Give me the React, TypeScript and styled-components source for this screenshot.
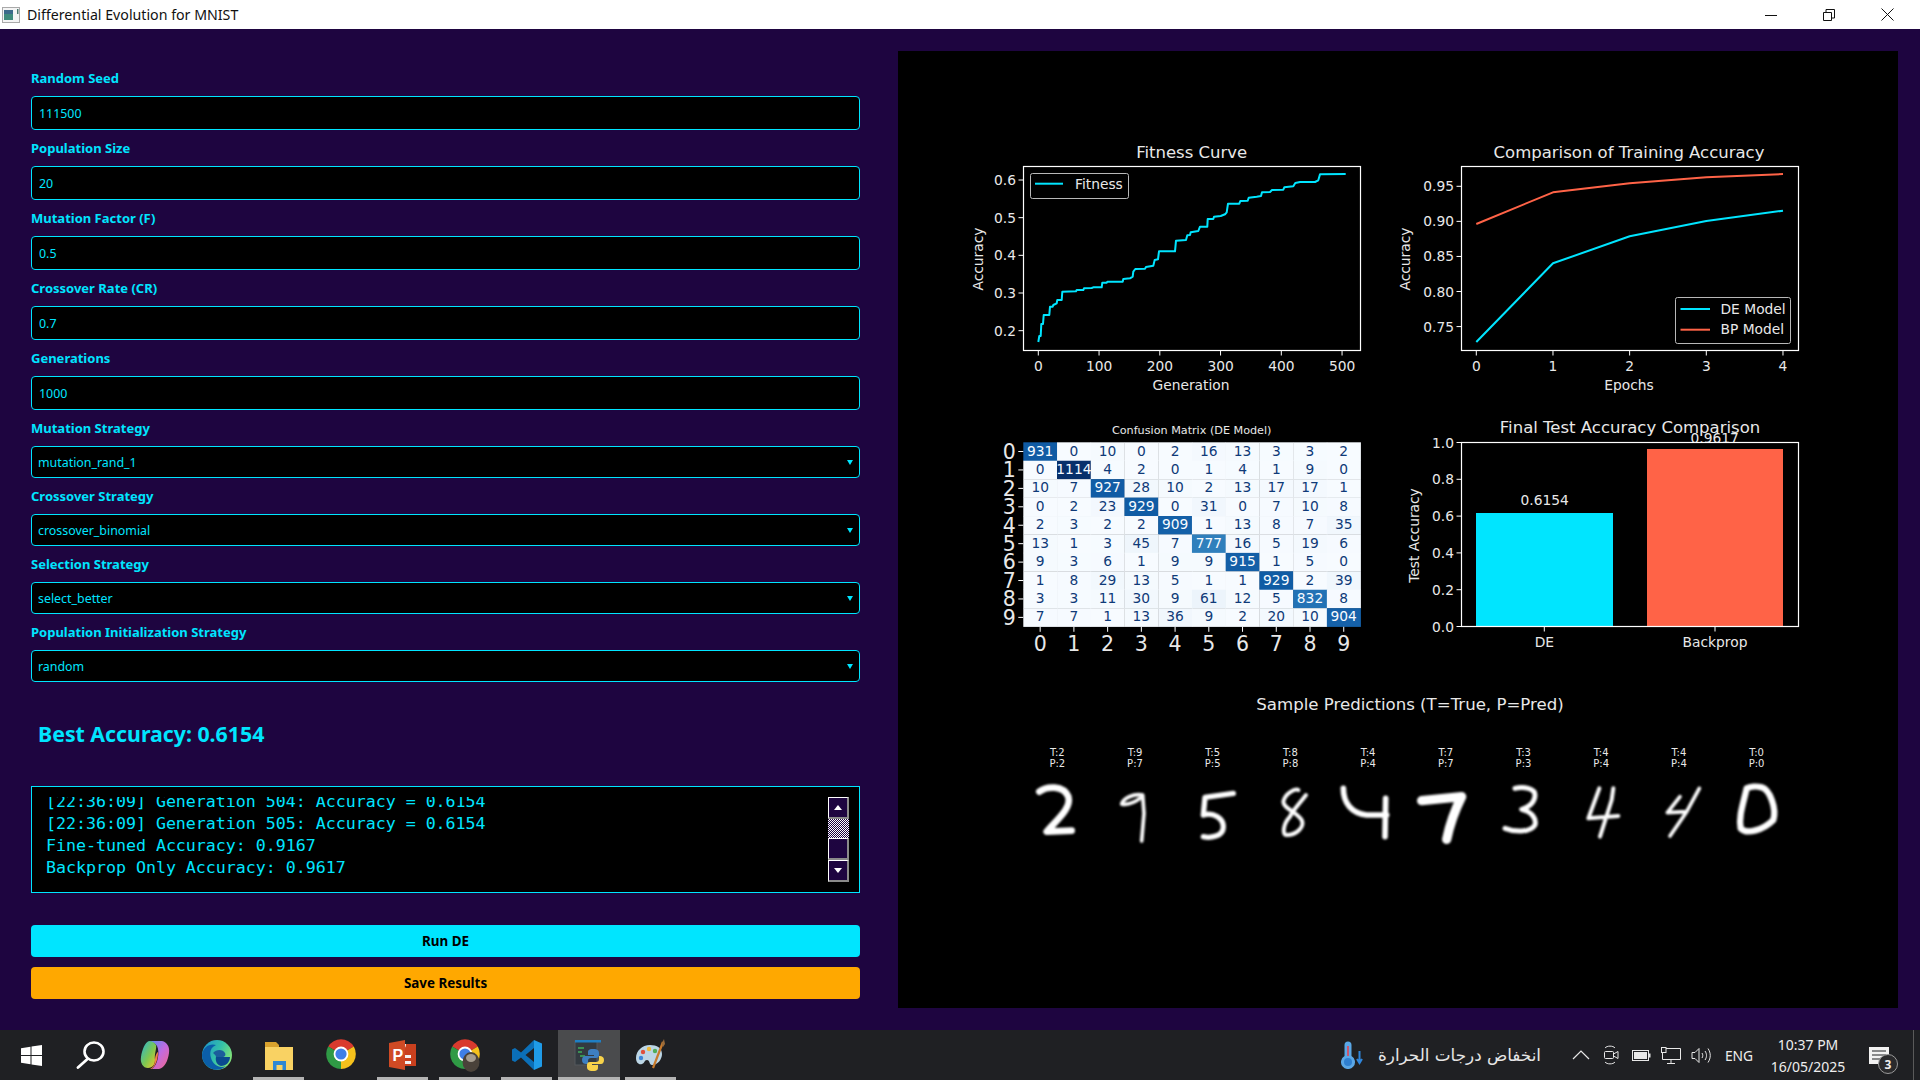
import React from 'react';
import styled, { createGlobalStyle } from 'styled-components';

const CYAN = '#00e5ff';
const TOMATO = '#ff6347';
const PURPLE = '#1e0540';

const GlobalStyle = createGlobalStyle`
  html, body {
    margin: 0;
    padding: 0;
    background: ${PURPLE};
    overflow: hidden;
  }
`;

const Window = styled.div`
  width: 1920px;
  height: 1080px;
  display: flex;
  flex-direction: column;
`;

const TitleBar = styled.header`
  height: 29px;
  background: #fff;
  display: flex;
  align-items: center;
  padding: 0 3px 0 2px;
  flex: none;
`;

const TitleText = styled.span`
  margin-left: 7px;
  flex: 1;
  font: 14.2px 'Noto Sans', sans-serif;
  color: #111;
`;

const WindowButton = styled.div`
  width: 58.5px;
  height: 29px;
  display: flex;
  align-items: center;
  justify-content: center;
`;

const Main = styled.main`
  flex: 1;
  display: flex;
  padding-left: 31px;
  min-height: 0;
`;

const Controls = styled.section`
  width: 829px;
  padding-top: 41px;
  display: flex;
  flex-direction: column;
`;

const FieldLabel = styled.label`
  display: block;
  height: 16px;
  margin-bottom: 10px;
  font: bold 13px/16px 'Noto Sans', sans-serif;
  color: ${CYAN};
`;

const TextInput = styled.input`
  display: block;
  box-sizing: border-box;
  width: 100%;
  height: 34px;
  margin-bottom: 10px;
  padding: 0 7px;
  background: #000;
  border: 1px solid ${CYAN};
  border-radius: 4px;
  outline: none;
  font: 12.4px 'Noto Sans', sans-serif;
  color: ${CYAN};
`;

const SelectWrap = styled.div`
  position: relative;
  height: 32px;
  margin-bottom: 10px;
  &::after {
    content: '';
    position: absolute;
    right: 7px;
    top: 14px;
    border-left: 3.5px solid transparent;
    border-right: 3.5px solid transparent;
    border-top: 5px solid ${CYAN};
  }
`;

const Select = styled.select`
  appearance: none;
  display: block;
  box-sizing: border-box;
  width: 100%;
  height: 32px;
  padding: 0 6px;
  background: #000;
  border: 1px solid ${CYAN};
  border-radius: 4px;
  outline: none;
  font: 12.4px 'Noto Sans', sans-serif;
  color: ${CYAN};
`;

const BestAccuracy = styled.div`
  margin: 27px 0 37px 7px;
  height: 30px;
  font: bold 21.3px/30px 'Noto Sans', sans-serif;
  color: ${CYAN};
`;

const LogBox = styled.div`
  box-sizing: border-box;
  height: 107px;
  background: #000;
  border: 1px solid ${CYAN};
  display: flex;
  padding: 10px 10px 10px 14px;
  margin-bottom: 32px;
`;

const LogViewport = styled.div`
  flex: 1;
  overflow: hidden;
`;

const LogLines = styled.div`
  margin-top: -6px;
  font: 16.6px/22px 'DejaVu Sans Mono', monospace;
  color: ${CYAN};
  white-space: pre;
`;

const ScrollBar = styled.div`
  width: 21px;
  display: flex;
  flex-direction: column;
`;

const ScrollButton = styled.div`
  box-sizing: border-box;
  flex: 1;
  background: ${PURPLE};
  border-top: 1px solid #fff;
  border-left: 1px solid #fff;
  border-right: 2px solid #8a8a8a;
  border-bottom: 2px solid #8a8a8a;
  display: flex;
  align-items: center;
  justify-content: center;
`;

const ScrollArrow = styled.div<{ $down?: boolean }>`
  border-left: 4.5px solid transparent;
  border-right: 4.5px solid transparent;
  ${(p) => (p.$down ? 'border-top: 5px solid #fff;' : 'border-bottom: 5px solid #fff;')}
`;

const ScrollTrough = styled.div`
  flex: 1;
  background: repeating-conic-gradient(#fff 0 25%, ${PURPLE} 0 50%) 0 0 / 2px 2px;
`;

const ActionButton = styled.button<{ $color: string }>`
  display: block;
  width: 100%;
  height: 32px;
  margin-bottom: 10px;
  border: none;
  border-radius: 4px;
  background: ${(p) => p.$color};
  font: bold 13.4px 'Noto Sans', sans-serif;
  color: #000;
`;

const PlotPanel = styled.section`
  width: 1000px;
  height: 957px;
  margin: 22px 0 0 38px;
  background: #000;
`;

const Figure = styled.svg`
  display: block;
  width: 1000px;
  height: 957px;
`;

const PlotText = styled.text<{ $size?: number; $color?: string }>`
  font-family: 'DejaVu Sans', sans-serif;
  font-size: ${(p) => p.$size ?? 13.8}px;
  fill: ${(p) => p.$color ?? '#e8e8e8'};
`;

const AxisLine = styled.line`
  stroke: #fff;
  stroke-width: 1;
`;

const AxesFrame = styled.rect`
  fill: none;
  stroke: #fff;
  stroke-width: 1.2;
`;

const DataLine = styled.polyline<{ $color: string }>`
  fill: none;
  stroke: ${(p) => p.$color};
  stroke-width: 2;
  stroke-linejoin: round;
`;

const LegendBox = styled.rect`
  fill: #000;
  stroke: #b8b8b8;
  stroke-width: 1;
`;

const DigitStroke = styled.path<{ $w: number }>`
  fill: none;
  stroke: #fff;
  stroke-width: ${(p) => p.$w};
  stroke-linecap: round;
  stroke-linejoin: round;
`;

const Taskbar = styled.footer`
  height: 50px;
  flex: none;
  background: #1f2023;
  display: flex;
  align-items: stretch;
`;

const TaskButton = styled.div<{ $active?: boolean; $open?: boolean }>`
  position: relative;
  width: 62px;
  display: flex;
  align-items: center;
  justify-content: center;
  background: ${(p) => (p.$active ? '#4a4b4d' : 'transparent')};
  ${(p) =>
    p.$open &&
    `&::after {
      content: '';
      position: absolute;
      left: ${p.$active ? 0 : 5}px;
      right: ${p.$active ? 0 : 6}px;
      bottom: 0;
      height: 3px;
      background: #b4b4b4;
    }`}
`;

const Weather = styled.div`
  margin-left: auto;
  display: flex;
  align-items: center;
  gap: 15px;
  padding-right: 25px;
`;

const WeatherText = styled.span`
  font: 16.8px 'DejaVu Sans', sans-serif;
  color: #e6e6e6;
`;

const TrayButton = styled.div`
  width: 30px;
  display: flex;
  align-items: center;
  justify-content: center;
`;

const Lang = styled.div`
  width: 46px;
  display: flex;
  align-items: center;
  justify-content: center;
  font: 13.8px 'Noto Sans', sans-serif;
  color: #eee;
`;

const Clock = styled.div`
  width: 92px;
  display: flex;
  flex-direction: column;
  align-items: center;
  justify-content: center;
  gap: 3px;
  font: 14px/19px 'Noto Sans', sans-serif;
  color: #eee;
`;

const NotifyButton = styled.div`
  position: relative;
  box-sizing: border-box;
  width: 60px;
  margin-right: 6px;
  padding-right: 10px;
  border-right: 1px solid #5a5a5a;
  display: flex;
  align-items: center;
  justify-content: center;
`;

const NotifyBadge = styled.span`
  position: absolute;
  left: 24px;
  top: 24px;
  width: 20px;
  height: 20px;
  box-sizing: border-box;
  border-radius: 50%;
  border: 1px solid #9a9a9a;
  background: #2a2a2c;
  display: flex;
  align-items: center;
  justify-content: center;
  font: bold 12px 'Noto Sans', sans-serif;
  color: #eee;
`;

const inputFields = [
  ['Random Seed', '111500'],
  ['Population Size', '20'],
  ['Mutation Factor (F)', '0.5'],
  ['Crossover Rate (CR)', '0.7'],
  ['Generations', '1000'],
];

const selectFields = [
  ['Mutation Strategy', 'mutation_rand_1'],
  ['Crossover Strategy', 'crossover_binomial'],
  ['Selection Strategy', 'select_better'],
  ['Population Initialization Strategy', 'random'],
];

const logLines = [
  '[22:36:09] Generation 504: Accuracy = 0.6154',
  '[22:36:09] Generation 505: Accuracy = 0.6154',
  'Fine-tuned Accuracy: 0.9167',
  'Backprop Only Accuracy: 0.9617',
];

const fitnessTrace = [
  265, 636, 268, 618, 272, 618, 274, 582, 279, 582, 281, 555, 298, 555, 300, 530, 308, 530, 310, 525, 320, 520, 322, 510,
  335, 510, 337, 485, 378, 484, 380, 480, 400, 480, 402, 475, 425, 474, 430, 472, 455, 472, 457, 458, 470, 458, 472, 455,
  518, 455, 520, 447, 540, 445, 548, 440, 550, 425, 556, 417, 585, 416, 588, 411, 610, 407, 614, 390, 624, 388, 627, 364,
  675, 364, 678, 332, 708, 330, 712, 316, 720, 315, 722, 307, 745, 303, 750, 290, 772, 290, 773, 267, 790, 267, 792, 260,
  812, 258, 825, 253, 830, 247, 834, 221, 868, 221, 871, 213, 893, 212, 896, 203, 920, 200, 933, 198, 936, 187, 960, 186,
  966, 180, 1000, 179, 1003, 172, 1030, 169, 1036, 159, 1050, 156, 1095, 156, 1105, 151, 1110, 133, 1187, 132,
];

// traced at 3x, so points are divided back down
const tracePoints = (trace: number[], ox: number, oy: number) =>
  trace.map((v, i) => (i % 2 === 0 ? ox + v / 3 : oy + v / 3).toFixed(1)).join(' ');

const confusion = [
  [931, 0, 10, 0, 2, 16, 13, 3, 3, 2],
  [0, 1114, 4, 2, 0, 1, 4, 1, 9, 0],
  [10, 7, 927, 28, 10, 2, 13, 17, 17, 1],
  [0, 2, 23, 929, 0, 31, 0, 7, 10, 8],
  [2, 3, 2, 2, 909, 1, 13, 8, 7, 35],
  [13, 1, 3, 45, 7, 777, 16, 5, 19, 6],
  [9, 3, 6, 1, 9, 9, 915, 1, 5, 0],
  [1, 8, 29, 13, 5, 1, 1, 929, 2, 39],
  [3, 3, 11, 30, 9, 61, 12, 5, 832, 8],
  [7, 7, 1, 13, 36, 9, 2, 20, 10, 904],
];

const blues = [
  [247, 251, 255],
  [222, 235, 247],
  [198, 219, 239],
  [158, 202, 225],
  [107, 174, 214],
  [66, 146, 198],
  [33, 113, 181],
  [8, 81, 156],
  [8, 48, 107],
];

const bluesAt = (t: number) => {
  const pos = t * (blues.length - 1);
  const i = Math.min(Math.floor(pos), blues.length - 2);
  const f = pos - i;
  const c = blues[i].map((v, k) => Math.round(v + (blues[i + 1][k] - v) * f));
  return `rgb(${c[0]},${c[1]},${c[2]})`;
};

const YTick = ({ x, y, label, size }: { x: number; y: number; label: string; size?: number }) => (
  <g>
    <AxisLine x1={x - 5} x2={x} y1={y} y2={y} />
    <PlotText x={x - 7.5} y={y + (size ? size * 0.36 : 5)} textAnchor="end" $size={size}>
      {label}
    </PlotText>
  </g>
);

const XTick = ({ x, y, label, size, dy = 20.5 }: { x: number; y: number; label: string; size?: number; dy?: number }) => (
  <g>
    <AxisLine x1={x} x2={x} y1={y} y2={y + 5} />
    <PlotText x={x} y={y + dy} textAnchor="middle" $size={size}>
      {label}
    </PlotText>
  </g>
);

const YLabel = ({ x, y, children }: { x: number; y: number; children: string }) => (
  <PlotText transform={`translate(${x} ${y}) rotate(-90)`} textAnchor="middle">
    {children}
  </PlotText>
);

const FitnessChart = () => (
  <g>
    <PlotText x={1191.7} y={157.5} textAnchor="middle" $size={16.5}>
      Fitness Curve
    </PlotText>
    <DataLine $color={CYAN} points={tracePoints(fitnessTrace, 950, 130)} />
    <AxesFrame x={1023.5} y={166.5} width={337} height={184} />
    {[0, 100, 200, 300, 400, 500].map((v) => (
      <XTick key={v} x={1038.3 + v * 0.6075} y={350.5} label={String(v)} />
    ))}
    {[0.6, 0.5, 0.4, 0.3, 0.2].map((v, i) => (
      <YTick key={v} x={1023.5} y={180 + i * 37.67} label={v.toFixed(1)} />
    ))}
    <PlotText x={1191} y={389.5} textAnchor="middle">
      Generation
    </PlotText>
    <YLabel x={982.5} y={259}>
      Accuracy
    </YLabel>
    <LegendBox x={1030.5} y={173.5} width={98} height={25} rx={2} />
    <DataLine $color={CYAN} points="1035,183.7 1063,183.7" />
    <PlotText x={1075} y={188.5}>
      Fitness
    </PlotText>
  </g>
);

const TrainingChart = () => (
  <g>
    <PlotText x={1629} y={157.5} textAnchor="middle" $size={16.5}>
      Comparison of Training Accuracy
    </PlotText>
    <DataLine $color={TOMATO} points={tracePoints([289, 282, 519, 187, 749, 160, 979, 142, 1209, 132], 1380, 130)} />
    <DataLine $color={CYAN} points={tracePoints([289, 636, 519, 400, 749, 319, 979, 273, 1209, 242], 1380, 130)} />
    <AxesFrame x={1461.5} y={166.5} width={337} height={184} />
    {[0, 1, 2, 3, 4].map((v) => (
      <XTick key={v} x={1476.3 + v * 76.67} y={350.5} label={String(v)} />
    ))}
    {['0.95', '0.90', '0.85', '0.80', '0.75'].map((v, i) => (
      <YTick key={v} x={1461.5} y={186.3 + i * 35.07} label={v} />
    ))}
    <PlotText x={1629} y={389.5} textAnchor="middle">
      Epochs
    </PlotText>
    <YLabel x={1410} y={259}>
      Accuracy
    </YLabel>
    <LegendBox x={1675.5} y={297.5} width={115} height={46} rx={2} />
    <DataLine $color={CYAN} points="1680.5,309 1710,309" />
    <DataLine $color={TOMATO} points="1680.5,329.7 1710,329.7" />
    <PlotText x={1720.5} y={313.5}>
      DE Model
    </PlotText>
    <PlotText x={1720.5} y={334}>
      BP Model
    </PlotText>
  </g>
);

const CELL_W = 33.73;
const CELL_H = 18.43;
const MATRIX_X = 1023.3;
const MATRIX_Y = 442.3;

const ConfusionMatrix = () => (
  <g>
    <PlotText x={1191.7} y={434} textAnchor="middle" $size={11.2}>
      Confusion Matrix (DE Model)
    </PlotText>
    {confusion.map((row, r) =>
      row.map((v, c) => (
        <g key={`${r}-${c}`}>
          <rect
            x={MATRIX_X + c * CELL_W}
            y={MATRIX_Y + r * CELL_H}
            width={CELL_W + 0.3}
            height={CELL_H + 0.3}
            fill={bluesAt(v / 1114)}
          />
          <PlotText
            x={MATRIX_X + (c + 0.5) * CELL_W}
            y={MATRIX_Y + (r + 0.5) * CELL_H + 4}
            textAnchor="middle"
            $size={13.8}
            $color={v > 557 ? '#f7fbff' : '#0f3a78'}
          >
            {v}
          </PlotText>
        </g>
      )),
    )}
    {confusion.map((_, i) => (
      <g key={i}>
        <XTick x={MATRIX_X + (i + 0.5) * CELL_W} y={626.8} label={String(i)} size={20.5} dy={24.5} />
        <YTick x={MATRIX_X} y={MATRIX_Y + (i + 0.5) * CELL_H} label={String(i)} size={20.5} />
      </g>
    ))}
  </g>
);

const BarChart = () => (
  <g>
    <PlotText x={1630} y={433} textAnchor="middle" $size={16.5}>
      Final Test Accuracy Comparison
    </PlotText>
    <PlotText x={1714.7} y={443} textAnchor="middle">
      0.9617
    </PlotText>
    <rect x={1476} y={513} width={137} height={113.3} fill={CYAN} />
    <rect x={1647} y={449} width={136} height={177.3} fill={TOMATO} />
    <PlotText x={1544.7} y={505} textAnchor="middle">
      0.6154
    </PlotText>
    <AxesFrame x={1461.5} y={442.5} width={337} height={184} />
    {['1.0', '0.8', '0.6', '0.4', '0.2', '0.0'].map((v, i) => (
      <YTick key={v} x={1461.5} y={442.5 + i * 36.8} label={v} />
    ))}
    <XTick x={1544.3} y={626.5} label="DE" />
    <XTick x={1715} y={626.5} label="Backprop" />
    <YLabel x={1419} y={535.5}>
      Test Accuracy
    </YLabel>
  </g>
);

const samples = [
  ['2', '2'],
  ['9', '7'],
  ['5', '5'],
  ['8', '8'],
  ['4', '4'],
  ['7', '7'],
  ['3', '3'],
  ['4', '4'],
  ['4', '4'],
  ['0', '0'],
];

const digitPaths: { d: string; w: number; ox: number }[] = [
  { d: 'M118 335 C140 318 190 315 205 350 C215 385 170 420 140 455 L215 452', w: 20, ox: 1000 },
  { d: 'M428 345 C400 340 370 355 365 372 C385 378 420 360 428 345 L432 400 L425 483', w: 11, ox: 1000 },
  { d: 'M700 340 L615 352 L610 405 C640 395 670 415 670 440 C670 470 630 475 610 470', w: 16, ox: 1000 },
  {
    d: 'M918 345 C895 375 875 395 870 410 C850 430 845 465 860 465 C890 465 915 440 905 420 C890 395 850 385 850 365 C855 340 885 325 895 330',
    w: 12,
    ox: 1000,
  },
  { d: 'M1030 325 C1030 370 1055 400 1100 405 L1160 405 M1157 355 L1155 470', w: 17, ox: 1000 },
  { d: 'M65 362 L185 350 C165 390 150 430 140 478', w: 28, ox: 1400 },
  { d: 'M345 325 C370 318 405 325 405 345 C405 370 380 385 365 388 C395 395 410 415 405 435 C390 460 340 455 315 445', w: 15, ox: 1400 },
  { d: 'M598 325 L565 415 L655 408 M640 325 L635 360 L600 470', w: 12, ox: 1400 },
  { d: 'M840 350 L802 398 L860 395 M898 325 L860 395 L810 468', w: 11, ox: 1400 },
  { d: 'M1040 325 C1030 370 1015 410 1022 445 C1040 465 1090 450 1120 420 C1130 385 1110 330 1085 322 C1070 318 1050 320 1040 325 Z', w: 19, ox: 1400 },
];

const SamplePredictions = () => (
  <g>
    <defs>
      <filter id="mnist-blur" x="-20%" y="-20%" width="140%" height="140%">
        <feGaussianBlur stdDeviation="0.9" />
      </filter>
    </defs>
    <PlotText x={1410} y={709.5} textAnchor="middle" $size={16.6}>
      Sample Predictions (T=True, P=Pred)
    </PlotText>
    {samples.map(([t, p], i) => (
      <g key={i}>
        <PlotText x={1057.3 + i * 77.7} y={755.5} textAnchor="middle" $size={10}>
          {`T:${t}`}
        </PlotText>
        <PlotText x={1057.3 + i * 77.7} y={767} textAnchor="middle" $size={10}>
          {`P:${p}`}
        </PlotText>
      </g>
    ))}
    <g filter="url(#mnist-blur)">
      {digitPaths.map((digit, i) => (
        <g key={i} transform={`translate(${digit.ox} 680) scale(${1 / 3})`}>
          <DigitStroke d={digit.d} $w={digit.w} />
        </g>
      ))}
    </g>
  </g>
);

const AppIcon = () => (
  <svg width="18" height="16" viewBox="0 0 18 16">
    <rect x="0.5" y="0.5" width="17" height="15" fill="#f4f4f4" stroke="#a9a9a9" />
    <rect x="2" y="3" width="9" height="10" fill="#3f8a7c" />
    <rect x="2" y="3" width="9" height="4" fill="#3c6a8a" />
    <rect x="15" y="2" width="1.5" height="5" fill="#4c7a70" />
  </svg>
);

const MinimizeIcon = () => (
  <svg width="12" height="12" viewBox="0 0 12 12">
    <path d="M0 6.5H12" stroke="#111" fill="none" />
  </svg>
);

const RestoreIcon = () => (
  <svg width="12" height="12" viewBox="0 0 12 12">
    <path d="M0.5 3.5H8.5V11.5H0.5Z M3 3V0.5H11.5V9H9" stroke="#111" fill="none" />
  </svg>
);

const CloseIcon = () => (
  <svg width="13" height="13" viewBox="0 0 13 13">
    <path d="M0.5 0.5L12.5 12.5M12.5 0.5L0.5 12.5" stroke="#111" fill="none" />
  </svg>
);

const WindowsIcon = () => (
  <svg width="21" height="21" viewBox="0 0 21 21">
    <path fill="#fff" d="M0 3.2L9.5 1.7V10H0ZM10.5 1.5L21 0V10H10.5ZM0 11H9.5V19.3L0 17.8ZM10.5 11H21V21L10.5 19.5Z" />
  </svg>
);

const SearchIcon = () => (
  <svg width="34" height="28" viewBox="0 0 34 28">
    <ellipse cx="18" cy="10.5" rx="9.5" ry="9" fill="none" stroke="#fff" strokeWidth="2.6" />
    <path d="M11.5 18L2 26.5" stroke="#fff" strokeWidth="2.8" strokeLinecap="round" />
  </svg>
);

const CopilotIcon = () => (
  <svg width="30" height="30" viewBox="0 0 30 30">
    <defs>
      <linearGradient id="cp-a" x1="0" y1="0" x2="1" y2="1">
        <stop offset="0" stopColor="#27b4d8" />
        <stop offset="0.55" stopColor="#7ec850" />
        <stop offset="1" stopColor="#f7c52a" />
      </linearGradient>
      <linearGradient id="cp-b" x1="0" y1="0" x2="1" y2="1">
        <stop offset="0" stopColor="#4f8df0" />
        <stop offset="0.5" stopColor="#c26be0" />
        <stop offset="1" stopColor="#f2668a" />
      </linearGradient>
    </defs>
    <path fill="url(#cp-b)" d="M9 1H22C27 2 30 7 29 13C28 20 25 28 19 29H12C18 25 20 12 17 6C15 3 12 2 9 1Z" />
    <path fill="url(#cp-a)" d="M9 1C5 2 2 10 1 17C0 23 3 28 8 28C13 28 15 24 15 20C14 14 17 8 16 5C15 3 12 1 9 1Z" />
    <path fill="#f47a4a" d="M15 20C15 16 17 12 18 12C18 17 17 24 12 29H10C13 28 15 24 15 20Z" />
  </svg>
);

const EdgeIcon = () => (
  <svg width="30" height="30" viewBox="0 0 30 30">
    <defs>
      <linearGradient id="edge-a" x1="0" y1="0" x2="1" y2="0.5">
        <stop offset="0" stopColor="#1b8fd0" />
        <stop offset="0.6" stopColor="#34c1a8" />
        <stop offset="1" stopColor="#7fe27a" />
      </linearGradient>
    </defs>
    <circle cx="15" cy="15" r="15" fill="url(#edge-a)" />
    <path fill="#0b5ea8" d="M0 15C1 7 8 3 14 5C9 7 7 12 9 18C11 25 18 29 24 26C20 30 13 31 8 28C3 25 0 20 0 15Z" />
    <path fill="#1b5d9c" d="M11 13C14 9 21 9 23 13C24 15 23 17 20 17H14C14 15 12 14 11 13Z" />
    <path fill="#0a4a8f" d="M14 17H28C28 22 24 26 19 26C15 25 13 21 14 17Z" />
  </svg>
);

const FolderIcon = () => (
  <svg width="28" height="30" viewBox="0 0 28 30">
    <path fill="#d9a22e" d="M0 2H11L14 5V12H0Z" />
    <path fill="#f9d263" d="M0 7H28V30H0Z" />
    <path fill="#2d87d4" d="M8 21H21V30H17.5V25H11.5V30H8Z" />
  </svg>
);

const ChromeIcon = ({ photo }: { photo?: boolean }) => (
  <svg width="30" height="34" viewBox="0 0 30 34">
    <path fill="#d93a2e" d="M15 16L2.2 8.5A15 15 0 0 1 27.8 8.5Z" />
    <path fill="#f6c21c" d="M15 16L27.8 8.5A15 15 0 0 1 15 31Z" />
    <path fill="#2f9a45" d="M15 16L15 31A15 15 0 0 1 2.2 8.5Z" />
    <circle cx="15" cy="16" r="7.4" fill="#fff" />
    <circle cx="15" cy="16" r="5.6" fill="#3f7fe8" />
    {photo && (
      <g>
        <ellipse cx="21" cy="24" rx="8.5" ry="10" fill="#4a423a" />
        <ellipse cx="21" cy="20" rx="5" ry="4" fill="#a69d90" />
      </g>
    )}
  </svg>
);

const PowerPointIcon = () => (
  <svg width="28" height="30" viewBox="0 0 28 30">
    <path fill="#f2f2f2" d="M12 4H27V26H12Z" />
    <path fill="#c9401e" d="M17 4H27V26H12V24H22V21H12V18H22V15H12V10C14 10 17 8 17 4Z" />
    <path fill="#d04a24" d="M0 3L16 0V30L0 27Z" />
    <text x="3.5" y="21" fontFamily="'Liberation Sans', sans-serif" fontWeight="700" fontSize="16" fill="#fff">
      P
    </text>
  </svg>
);

const VSCodeIcon = () => (
  <svg width="30" height="30" viewBox="0 0 30 30">
    <path fill="#0b6fb8" d="M22 0L9 12.5L3 8L0 9.5V20.5L3 22L9 17.5L22 30V22L13.5 15L22 8Z" />
    <path fill="#1f9be8" d="M22 0L30 3.5V26.5L22 30Z" />
    <path fill="#0b6fb8" d="M3 11.5L6.5 15L3 18.5Z" />
  </svg>
);

const PythonIcon = () => (
  <svg width="30" height="32" viewBox="0 0 30 32">
    <rect x="1" y="2" width="22" height="24" fill="#333a40" stroke="#55595d" />
    <rect x="1" y="1" width="26" height="2.5" fill="#1f7fc4" />
    <path d="M4 9H10M4 13H8M6 17H11" stroke="#3fae5a" strokeWidth="1.4" />
    <path fill="#3d7fc1" d="M19 10C14 10 14 12 14 14V16H20V17H11C9 17 8 19 8 21C8 24 10 25 12 25H14V22C14 20 15 19 17 19H22C24 19 25 18 25 16V14C25 12 24 10 19 10Z" />
    <path fill="#f7d24a" d="M19 32C24 32 24 30 24 28V26H18V25H27C29 25 30 23 30 21C30 18 28 17 26 17H25V20C25 22 24 23 22 23H16C14 23 13 24 13 26V28C13 30 14 32 19 32Z" />
  </svg>
);

const PaletteIcon = () => (
  <svg width="30" height="32" viewBox="0 0 30 32">
    <path fill="#bcd6e6" d="M14 6C6 6 0 12 0 19C0 24 3 26 6 25C9 24 8 21 11 21C14 21 13 26 16 26C22 26 26 20 26 15C26 9 21 6 14 6Z" />
    <circle cx="7" cy="13" r="2.2" fill="#e0503c" />
    <circle cx="13" cy="10" r="2.2" fill="#f0b93a" />
    <circle cx="19" cy="12" r="2.2" fill="#4fae58" />
    <circle cx="5" cy="19" r="2.2" fill="#3f86d8" />
    <path d="M27 3L17 29" stroke="#c87a2c" strokeWidth="2.2" />
    <path d="M25.5 5L28 0L29 5L27 8Z" fill="#9a6b3a" />
  </svg>
);

const ThermometerIcon = () => (
  <svg width="22" height="28" viewBox="0 0 22 28">
    <path fill="#5aa7e6" d="M3.5 4A3.5 3.5 0 0 1 10.5 4V15A7 7 0 1 1 3.5 15Z" />
    <rect x="6" y="5" width="2" height="10" fill="#c9566e" />
    <circle cx="7" cy="21" r="4" fill="#2f7fd0" />
    <path d="M18.5 10V21M16 18L18.5 22L21 18" stroke="#2f86dc" strokeWidth="2" fill="none" />
  </svg>
);

const TrayStroke = styled.svg`
  fill: none;
  stroke: #e8e8e8;
  stroke-width: 1;
`;

const ChevronIcon = () => (
  <TrayStroke width="18" height="10" viewBox="0 0 18 10">
    <path d="M1 9L9 1L17 9" strokeWidth="1.2" />
  </TrayStroke>
);

const MeetIcon = () => (
  <TrayStroke width="16" height="20" viewBox="0 0 16 20">
    <path d="M2 3C4 0.5 10 0.5 12 3M2 17C4 19.5 10 19.5 12 17" />
    <rect x="1.5" y="6.5" width="9" height="7" rx="1" />
    <path d="M10.5 9L15 6.5V13.5L10.5 11" />
  </TrayStroke>
);

const BatteryIcon = () => (
  <TrayStroke width="19" height="11" viewBox="0 0 19 11">
    <rect x="0.5" y="0.5" width="16" height="10" />
    <rect x="2" y="2" width="13" height="7" fill="#e8e8e8" stroke="none" />
    <rect x="17" y="3.5" width="1.5" height="4" fill="#e8e8e8" stroke="none" />
  </TrayStroke>
);

const NetworkIcon = () => (
  <TrayStroke width="20" height="17" viewBox="0 0 20 17">
    <path d="M5 1.5H19.5V12.5H1.5V6" />
    <path d="M10 12.5V16M6 16.5H14" />
    <rect x="0.5" y="0.5" width="4.5" height="5" fill="#1f2023" />
  </TrayStroke>
);

const SpeakerIcon = () => (
  <TrayStroke width="20" height="17" viewBox="0 0 20 17">
    <path d="M1 5.5H4L8 1.5V15.5L4 11.5H1Z" />
    <path d="M11 6C12 7.5 12 9.5 11 11M14 4C16 7 16 10 14 13M17 1.5C20 6 20 11 17 15.5" />
  </TrayStroke>
);

const NotifyIcon = () => (
  <svg width="20" height="17" viewBox="0 0 20 17">
    <path fill="#f2f2f2" d="M0 0H20V17H0Z" />
    <path d="M3 4H17M3 8H17M3 12H12" stroke="#1f2023" strokeWidth="1" />
  </svg>
);

const taskApps = [
  { key: 'start', icon: <WindowsIcon /> },
  { key: 'search', icon: <SearchIcon /> },
  { key: 'copilot', icon: <CopilotIcon /> },
  { key: 'edge', icon: <EdgeIcon /> },
  { key: 'files', icon: <FolderIcon />, open: true },
  { key: 'chrome', icon: <ChromeIcon /> },
  { key: 'powerpoint', icon: <PowerPointIcon />, open: true },
  { key: 'chrome-2', icon: <ChromeIcon photo />, open: true },
  { key: 'vscode', icon: <VSCodeIcon />, open: true },
  { key: 'python', icon: <PythonIcon />, open: true, active: true },
  { key: 'paint', icon: <PaletteIcon />, open: true },
];

export default function App() {
  return (
    <Window>
      <GlobalStyle />
      <TitleBar>
        <AppIcon />
        <TitleText>Differential Evolution for MNIST</TitleText>
        <WindowButton>
          <MinimizeIcon />
        </WindowButton>
        <WindowButton>
          <RestoreIcon />
        </WindowButton>
        <WindowButton>
          <CloseIcon />
        </WindowButton>
      </TitleBar>
      <Main>
        <Controls>
          {inputFields.map(([label, value]) => (
            <div key={label}>
              <FieldLabel>{label}</FieldLabel>
              <TextInput readOnly value={value} />
            </div>
          ))}
          {selectFields.map(([label, value]) => (
            <div key={label}>
              <FieldLabel>{label}</FieldLabel>
              <SelectWrap>
                <Select value={value} onChange={() => undefined}>
                  <option value={value}>{value}</option>
                </Select>
              </SelectWrap>
            </div>
          ))}
          <BestAccuracy>Best Accuracy: 0.6154</BestAccuracy>
          <LogBox>
            <LogViewport>
              <LogLines>
                {logLines.map((line) => (
                  <div key={line}>{line}</div>
                ))}
              </LogLines>
            </LogViewport>
            <ScrollBar>
              <ScrollButton>
                <ScrollArrow />
              </ScrollButton>
              <ScrollTrough />
              <ScrollButton />
              <ScrollButton>
                <ScrollArrow $down />
              </ScrollButton>
            </ScrollBar>
          </LogBox>
          <ActionButton $color={CYAN}>Run DE</ActionButton>
          <ActionButton $color="#ffa800">Save Results</ActionButton>
        </Controls>
        <PlotPanel>
          <Figure viewBox="898 51 1000 957">
            <FitnessChart />
            <TrainingChart />
            <ConfusionMatrix />
            <BarChart />
            <SamplePredictions />
          </Figure>
        </PlotPanel>
      </Main>
      <Taskbar>
        {taskApps.map((app) => (
          <TaskButton key={app.key} $open={app.open} $active={app.active}>
            {app.icon}
          </TaskButton>
        ))}
        <Weather>
          <ThermometerIcon />
          <WeatherText dir="rtl">انخفاض درجات الحرارة</WeatherText>
        </Weather>
        <TrayButton>
          <ChevronIcon />
        </TrayButton>
        <TrayButton>
          <MeetIcon />
        </TrayButton>
        <TrayButton>
          <BatteryIcon />
        </TrayButton>
        <TrayButton>
          <NetworkIcon />
        </TrayButton>
        <TrayButton>
          <SpeakerIcon />
        </TrayButton>
        <Lang>ENG</Lang>
        <Clock>
          <span>10:37 PM</span>
          <span>16/05/2025</span>
        </Clock>
        <NotifyButton>
          <NotifyIcon />
          <NotifyBadge>3</NotifyBadge>
        </NotifyButton>
      </Taskbar>
    </Window>
  );
}
